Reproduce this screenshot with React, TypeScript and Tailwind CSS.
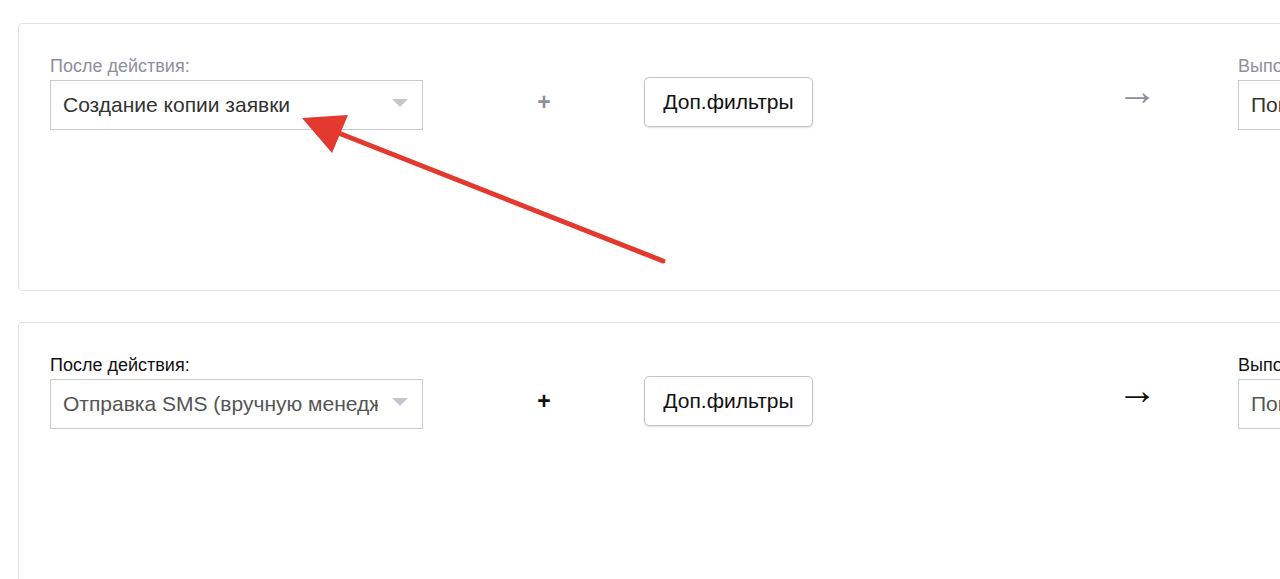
const FONT = { fontFamily: '"Liberation Sans", Arial, sans-serif' };

function Triangle() {
  return (
    <svg width="16" height="8" viewBox="0 0 16 8" className="shrink-0 ml-[14px] mr-[14px] -mt-[4px]">
      <polygon points="0,0 16,0 8,8" fill="#c5c5d1" />
    </svg>
  );
}

function Select({ value, muted }: { value: string; muted?: boolean }) {
  return (
    <div className="flex items-center w-[373px] h-[50px] border border-[#c9c9d1] bg-white">
      <span
        className={`flex-1 pl-[12px] overflow-hidden whitespace-nowrap text-[21px] leading-[24px] ${
          muted ? "text-[#333333]" : "text-[#555555]"
        }`}
      >
        {value}
      </span>
      <Triangle />
    </div>
  );
}

function RuleCard({ action, faded }: { action: string; faded?: boolean }) {
  const tone = faded ? "text-[#8f8f9c]" : "text-[#111111]";
  return (
    <div className="ml-[18px] w-[1700px] h-[268px] border border-[#e2e2e2] rounded-[4px] bg-white pt-8 pl-[31px]">
      <div className="flex items-start">
        {/* after action */}
        <div className="flex flex-col shrink-0 w-[373px]">
          <label className={`text-[18px] leading-[20px] mb-1 ${tone}`}>После действия:</label>
          <Select value={action} muted={faded} />
        </div>

        <div className={`shrink-0 ml-[111px] w-[20px] mt-[34px] text-center text-[23px] leading-[24px] font-bold ${tone}`}>
          +
        </div>

        <button
          type="button"
          className="shrink-0 ml-[90px] mt-[21px] w-[169px] h-[50px] border border-[#c4c4c4] rounded-[5px] bg-white shadow-[0_1px_2px_rgba(0,0,0,0.12)] text-[21px] text-[#111111]"
        >
          Доп.фильтры
        </button>

        <div className={`shrink-0 ml-[304px] w-[40px] mt-[15px] text-center text-[40px] leading-[40px] ${tone}`}>
          →
        </div>

        {/* then do */}
        <div className="shrink-0 ml-[81px] flex flex-col w-[373px]">
          <label className={`text-[18px] leading-[20px] mb-1 whitespace-nowrap ${tone}`}>Выполнить действие:</label>
          <Select value="Поменять статус" muted={faded} />
        </div>
      </div>
    </div>
  );
}

export default function App() {
  return (
    <div className="relative w-[1280px] h-[579px] overflow-hidden bg-white pt-[23px]" style={FONT}>
      <div className="flex flex-col gap-[31px]">
        <RuleCard action="Создание копии заявки" faded />
        <RuleCard action="Отправка SMS (вручную менеджером)" />
      </div>

      {/* red annotation arrow */}
      <svg className="absolute inset-0 pointer-events-none" width="1280" height="579">
        <line x1="663" y1="261" x2="336" y2="132" stroke="#e3392e" strokeWidth="5" strokeLinecap="round" />
        <polygon points="302,118 348,115 332,153" fill="#e3392e" />
      </svg>
    </div>
  );
}
